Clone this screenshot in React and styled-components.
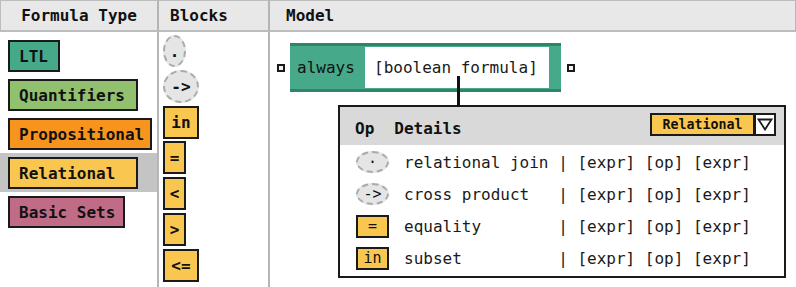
import React from 'react'
import styled, { createGlobalStyle } from 'styled-components'

const GlobalStyle = createGlobalStyle`
  body {
    margin: 0;
    background: #fff;
    font-family: "DejaVu Sans Mono", "Liberation Mono", monospace;
    color: #111;
  }
`

const Page = styled.div`
  width: 796px;
  height: 287px;
  display: grid;
  grid-template-columns: 159px 111px 1fr;
  grid-template-rows: 32px 255px;
  overflow: hidden;
`

const HeadCell = styled.div`
  box-sizing: border-box;
  background: #e8e8e8;
  border-top: 1px solid #bdbdbd;
  border-bottom: 2px solid #bdbdbd;
  border-right: ${p => (p.$last ? '1px' : '2px')} solid #b5b5b5;
  border-left: ${p => (p.$first ? '1px solid #bdbdbd' : 'none')};
  display: flex;
  align-items: center;
  justify-content: ${p => (p.$center ? 'center' : 'flex-start')};
  padding-left: ${p => p.$pad || 0}px;
  font-weight: bold;
  font-size: 16px;
`

const Column = styled.div`
  box-sizing: border-box;
  border-right: ${p => (p.$last ? 'none' : '2px solid #b5b5b5')};
  padding: ${p => p.$pad || '0'};
  position: relative;
`

const TypeRow = styled.div`
  box-sizing: border-box;
  height: 39px;
  padding: 4px 0 3px 8px;
  background: ${p => (p.$active ? '#c4c4c4' : 'transparent')};
`

const TypeBlock = styled.div`
  box-sizing: border-box;
  height: 32px;
  width: ${p => p.$w}px;
  border: 2px solid #1a1a1a;
  background: ${p => p.$color};
  padding-left: 9px;
  display: flex;
  align-items: center;
  font-weight: bold;
  font-size: 16px;
`

const BlockList = styled.div`
  display: flex;
  flex-direction: column;
  align-items: flex-start;
  gap: 2.8px;
`

const OpBlock = styled.div`
  box-sizing: border-box;
  width: ${p => p.$w}px;
  height: ${p => p.$h || 33}px;
  display: flex;
  align-items: center;
  justify-content: center;
  font-weight: ${p => (p.$light ? 'normal' : 'bold')};
  font-size: ${p => p.$size || 16}px;
  border: 2px ${p => (p.$oval ? 'dashed #ababab' : 'solid #1a1a1a')};
  border-radius: ${p => (p.$oval ? '50%' : '0')};
  background: ${p => (p.$oval ? '#e5e5e5' : '#f9c74f')};
  color: #111;
`

const ModelRow = styled.div`
  display: flex;
  align-items: center;
`

const Connector = styled.div`
  box-sizing: border-box;
  width: 8px;
  height: 8px;
  border: 2px solid #1a1a1a;
  background: #f2f2f2;
  margin: ${p => p.$m || '0'};
`

const FormulaBlock = styled.div`
  box-sizing: border-box;
  width: 271px;
  height: 49px;
  border-top: 3px solid #2f8469;
  border-bottom: 3px solid #2f8469;
  background: #46a98a;
  padding: 1px 12px 1px 0;
  display: flex;
`

const BlockLabel = styled.div`
  width: 75px;
  padding-left: 7px;
  box-sizing: border-box;
  display: flex;
  align-items: center;
  font-size: 16px;
`

const Slot = styled.div`
  flex: 1;
  background: #fff;
  display: flex;
  align-items: center;
  padding-left: 9px;
  font-size: 16px;
  color: #1a1a1a;
`

const Panel = styled.div`
  box-sizing: border-box;
  position: relative;
  width: 448px;
  height: 173px;
  margin: 13px 0 0 61px;
  border: 2px solid #1a1a1a;
  background: #fff;

  &::before {
    content: '';
    position: absolute;
    left: 117px;
    top: -31px;
    width: 3px;
    height: 31px;
    background: #111;
  }
`

const PanelHead = styled.div`
  height: 38px;
  background: #d9d9d9;
  display: flex;
  align-items: center;
  padding: 0 8px 0 15px;
`

const HeadLabel = styled.span`
  font-weight: bold;
  font-size: 16px;
  padding-top: 5px;
  margin-right: ${p => p.$gap || 0}px;
`

const Dropdown = styled.div`
  margin-left: auto;
  align-self: flex-start;
  margin-top: 6px;
  display: flex;
`

const Chip = styled.div`
  box-sizing: border-box;
  width: 105px;
  height: 23px;
  border: 2px solid #1a1a1a;
  background: #f9c74f;
  display: flex;
  align-items: center;
  justify-content: center;
  font-weight: bold;
  font-size: 13.3px;
`

const Arrow = styled.div`
  box-sizing: border-box;
  width: 22px;
  height: 23px;
  margin-left: -1px;
  border: 2px solid #1a1a1a;
  background: #fff;
  display: flex;
  align-items: center;
  justify-content: center;
`

const Rows = styled.div`
  padding-top: 1px;
`

const Row = styled.div`
  height: 32px;
  display: flex;
  align-items: center;
  padding-left: 16px;
  font-size: 16px;
  color: #1a1a1a;
`

const Name = styled.span`
  width: 16ch;
  margin-left: 15px;
  white-space: pre;
`

const types = [
  { label: 'LTL', color: '#46a98a', w: 52 },
  { label: 'Quantifiers', color: '#91c06e', w: 130 },
  { label: 'Propositional', color: '#f7941e', w: 144 },
  { label: 'Relational', color: '#f9c74f', w: 130, active: true },
  { label: 'Basic Sets', color: '#c06c86', w: 117 },
]

const blocks = [
  { t: '.', w: 23, h: 32, oval: true },
  { t: '->', w: 36, oval: true },
  { t: 'in', w: 36 },
  { t: '=', w: 23 },
  { t: '<', w: 23 },
  { t: '>', w: 23 },
  { t: '<=', w: 36 },
]

const ops = [
  { t: '·', oval: true, name: 'relational join' },
  { t: '->', oval: true, name: 'cross product' },
  { t: '=', name: 'equality' },
  { t: 'in', name: 'subset' },
]

export default function App() {
  return (
    <>
      <GlobalStyle />
      <Page>
        <HeadCell $first $center>Formula Type</HeadCell>
        <HeadCell $pad={11}>Blocks</HeadCell>
        <HeadCell $last $pad={16}>Model</HeadCell>

        <Column $pad="4px 0 0 0">
          {types.map(t => (
            <TypeRow key={t.label} $active={t.active}>
              <TypeBlock $w={t.w} $color={t.color}>{t.label}</TypeBlock>
            </TypeRow>
          ))}
        </Column>

        <Column $pad="3px 0 0 4px">
          <BlockList>
            {blocks.map(b => (
              <OpBlock key={b.t} $w={b.w} $h={b.h} $oval={b.oval}>{b.t}</OpBlock>
            ))}
          </BlockList>
        </Column>

        <Column $last $pad="11px 0 0 7px">
          <ModelRow>
            <Connector $m="0 5px 0 0" />
            <FormulaBlock>
              <BlockLabel>always</BlockLabel>
              <Slot>[boolean formula]</Slot>
            </FormulaBlock>
            <Connector $m="0 0 0 6px" />
          </ModelRow>

          <Panel>
            <PanelHead>
              <HeadLabel $gap={20}>Op</HeadLabel>
              <HeadLabel>Details</HeadLabel>
              <Dropdown>
                <Chip>Relational</Chip>
                <Arrow>
                  <svg width="16" height="13" viewBox="0 0 16 13">
                    <polygon points="1.5,1.5 14.5,1.5 8,11.5" fill="none" stroke="#1a1a1a" strokeWidth="1.8" />
                  </svg>
                </Arrow>
              </Dropdown>
            </PanelHead>
            <Rows>
              {ops.map(o => (
                <Row key={o.name}>
                  <OpBlock $w={33} $h={o.oval ? 22 : 23} $oval={o.oval} $light $size={15}>{o.t}</OpBlock>
                  <Name>{o.name}</Name>
                  <span>| [expr] [op] [expr]</span>
                </Row>
              ))}
            </Rows>
          </Panel>
        </Column>
      </Page>
    </>
  )
}
